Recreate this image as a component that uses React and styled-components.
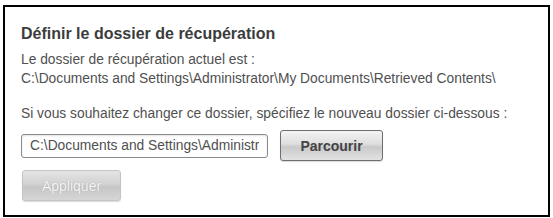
import React from 'react'
import styled, { createGlobalStyle } from 'styled-components'

const GlobalStyle = createGlobalStyle`
  body {
    margin: 0;
    background: #ffffff;
    font-family: "Liberation Sans", Arial, sans-serif;
  }
`

const Panel = styled.section`
  box-sizing: border-box;
  margin: 5px 0 0 3px;
  width: 547px;
  height: 212px;
  border: 2px solid #000;
  padding: 17px 16px 0 16px;
  color: #505050;
`

const Title = styled.h2`
  margin: 0 0 6px 0;
  font-size: 16px;
  font-weight: bold;
  color: #3c3c3c;
  line-height: 20px;
`

const Text = styled.p`
  margin: 0;
  font-size: 13.8px;
  line-height: 19px;
  margin-bottom: ${(p) => (p.gap ? `${p.gap}px` : '0')};
`

const Row = styled.div`
  display: flex;
  align-items: center;
  gap: 12px;
  margin-top: ${(p) => p.top || 0}px;
`

const PathInput = styled.input`
  box-sizing: border-box;
  width: 247px;
  height: 24px;
  padding: 0 8px;
  border: 1px solid #8a8a8a;
  border-radius: 3px;
  font-family: "Liberation Sans", Arial, sans-serif;
  font-size: 13.8px;
  color: #505050;
  background: #fff;
  box-shadow: inset 0 1px 2px rgba(0, 0, 0, 0.12);
`

const Button = styled.button`
  box-sizing: border-box;
  width: ${(p) => p.w}px;
  height: 31px;
  margin-left: ${(p) => p.left || 0}px;
  border-radius: 3px;
  border: 1px solid ${(p) => (p.disabled ? '#c4c4c4' : '#6e6e6e')};
  background: linear-gradient(
    to bottom,
    ${(p) => (p.disabled ? '#e4e4e4' : '#f4f4f4')} 0%,
    ${(p) => (p.disabled ? '#d2d2d2' : '#dedede')} 45%,
    ${(p) => (p.disabled ? '#c6c6c6' : '#c9c9c9')} 55%,
    ${(p) => (p.disabled ? '#d6d6d6' : '#e2e2e2')} 100%
  );
  font-family: "Liberation Sans", Arial, sans-serif;
  font-size: 14px;
  font-weight: ${(p) => (p.disabled ? 'normal' : 'bold')};
  color: ${(p) => (p.disabled ? '#f6f6f6' : '#444444')};
  text-shadow: ${(p) => (p.disabled ? '0 0 1px #999' : 'none')};
  box-shadow: 0 1px 1px rgba(0, 0, 0, 0.15);
  padding: 0;
`

export default function App() {
  return (
    <>
      <GlobalStyle />
      <Panel>
        <Title>Définir le dossier de récupération</Title>
        <Text>Le dossier de récupération actuel est :</Text>
        <Text gap={16}>C:\Documents and Settings\Administrator\My Documents\Retrieved Contents\</Text>
        <Text>Si vous souhaitez changer ce dossier, spécifiez le nouveau dossier ci-dessous :</Text>
        <Row top={7}>
          <PathInput readOnly value="C:\Documents and Settings\Administrator\My Documents\Retrieved Contents\" />
          <Button w={103}>Parcourir</Button>
        </Row>
        <Row top={9}>
          <Button w={99} left={1} disabled>Appliquer</Button>
        </Row>
      </Panel>
    </>
  )
}
